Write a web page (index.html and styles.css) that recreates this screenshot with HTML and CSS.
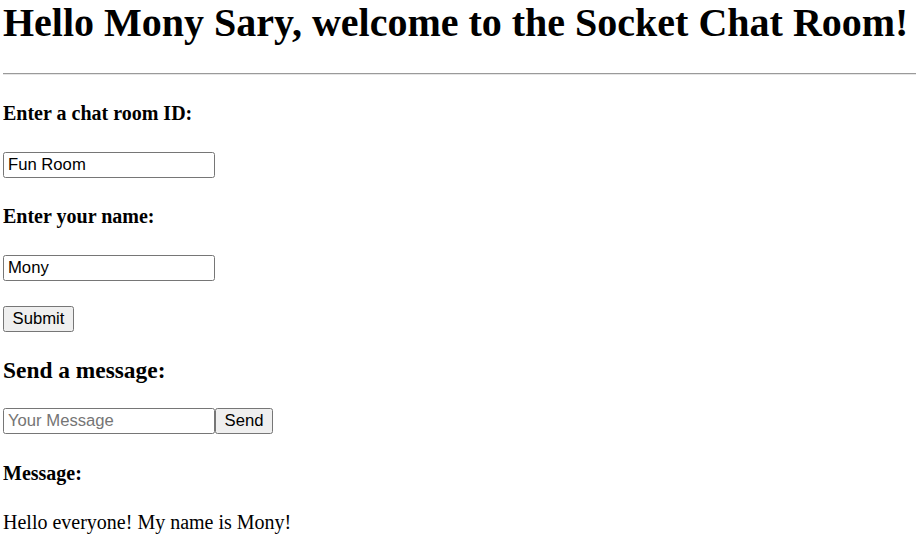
FILE: index.html
```html
<!DOCTYPE html>
<html>
<head>
<meta charset="utf-8">
<title>Socket Chat Room</title>
<link rel="stylesheet" href="styles.css">
</head>
<body class="page">
  <h1 class="title">Hello Mony Sary, welcome to the Socket Chat Room!</h1>
  <hr class="rule">
  <h4 class="label label-first">Enter a chat room ID:</h4>
  <div class="row"><input class="field" type="text" value="Fun Room"></div>
  <h4 class="label">Enter your name:</h4>
  <div class="row"><input class="field" type="text" value="Mony"></div>
  <div class="row row-submit"><button class="btn btn-submit" type="button">Submit</button></div>
  <h3 class="section">Send a message:</h3>
  <div class="row row-send"><input class="field" type="text" placeholder="Your Message"><button class="btn btn-send" type="button">Send</button></div>
  <h4 class="label label-msg">Message:</h4>
  <p class="message">Hello everyone! My name is Mony!</p>
</body>
</html>
```
FILE: styles.css
```css
html, body {
  overflow: hidden;
}
.page {
  margin: 0 0 0 3px;
  font-family: "Liberation Serif", "Times New Roman", serif;
  font-size: 20px;
  color: #000;
  background: #fff;
}
.title {
  margin: 0;
  font-size: 40px;
  line-height: 46px;
  font-weight: bold;
  white-space: nowrap;
}
.rule {
  margin: 27px 0 0 0;
  height: 0;
  border: none;
  border-top: 1px solid #9a9a9a;
  border-bottom: 1px solid #e6e6e6;
}
.label {
  margin: 27px 0 0 0;
  font-size: 20px;
  line-height: 23px;
  font-weight: bold;
}
.label-first {
  margin-top: 27px;
}
.row {
  display: flex;
  margin-top: 27px;
}
.row-submit {
  margin-top: 25px;
}
.row-send {
  margin-top: 24px;
}
.field {
  box-sizing: border-box;
  width: 212px;
  height: 26px;
  margin: 0;
  padding: 1px 4px;
  font-family: "Liberation Sans", Arial, sans-serif;
  font-size: 16.67px;
  color: #000;
  background: #fff;
  border: 1px solid #767676;
  border-radius: 2.5px;
  outline: none;
}
.field::placeholder {
  color: #757575;
}
.btn {
  box-sizing: border-box;
  height: 26px;
  margin: 0;
  padding: 0 8px;
  font-family: "Liberation Sans", Arial, sans-serif;
  font-size: 16.67px;
  color: #000;
  background: #efefef;
  border: 1px solid #767676;
  border-radius: 2.5px;
}
.btn-submit {
  width: 71px;
}
.btn-send {
  width: 58px;
}
.section {
  margin: 25px 0 0 0;
  font-size: 23.4px;
  line-height: 27px;
  font-weight: bold;
}
.label-msg {
  margin-top: 28px;
}
.message {
  margin: 26px 0 0 0;
  font-size: 20px;
  line-height: 23px;
}
```
